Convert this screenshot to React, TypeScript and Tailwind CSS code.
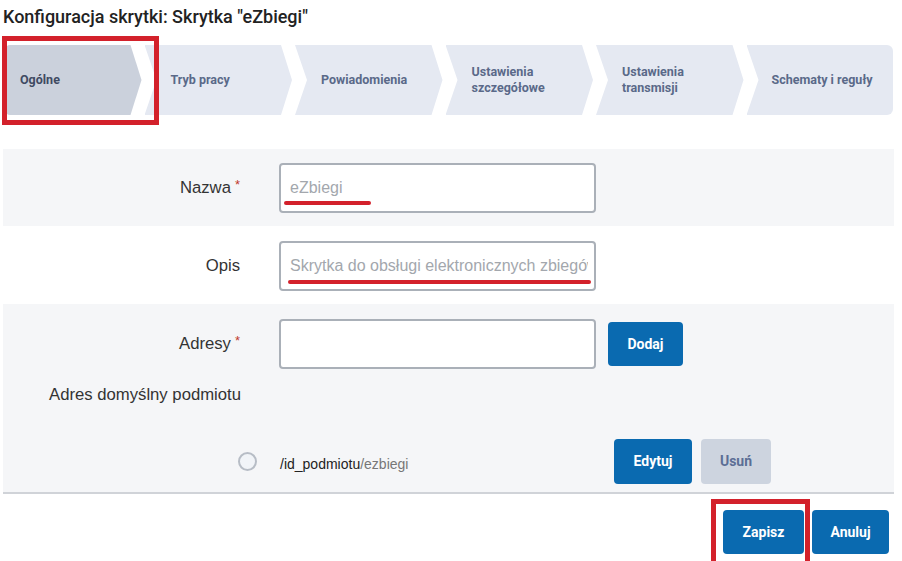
import React from "react";

const steps = [
  { label: "Ogólne", active: true },
  { label: "Tryb pracy" },
  { label: "Powiadomienia" },
  { label: ["Ustawienia", "szczegółowe"] },
  { label: ["Ustawienia", "transmisji"] },
  { label: "Schematy i reguły" },
];

function Step({ label, active, index, last }: { label: string | string[]; active?: boolean; index: number; last: boolean }) {
  let shape = "[clip-path:polygon(0_0,calc(100%_-_11px)_0,100%_50%,calc(100%_-_11px)_100%,0_100%,12px_50%)] pl-[26px]";
  if (index === 0) shape = "[clip-path:polygon(0_0,calc(100%_-_11px)_0,100%_50%,calc(100%_-_11px)_100%,0_100%)] pl-[14px] rounded-l-[4px]";
  if (last) shape = "[clip-path:polygon(0_0,100%_0,100%_100%,0_100%,12px_50%)] pl-[25px] rounded-r-[6px]";
  return (
    <div
      className={`flex-1 h-full flex items-center text-[12.5px] font-bold leading-[16px] ${shape} ${
        active ? "bg-[#cbd1dc] text-[#3f4a62]" : "bg-[#e5e9f2] text-[#5a6989]"
      }`}
    >
      {Array.isArray(label) ? (
        <div>
          {label.map((l) => (
            <div key={l}>{l}</div>
          ))}
        </div>
      ) : (
        label
      )}
    </div>
  );
}

function Label({ text, required }: { text: string; required?: boolean }) {
  return (
    <div className="w-[238px] shrink-0 text-right pr-[1px] text-[16.7px] text-[#333]">
      {text}
      {required && <span className="text-[#c0392b] text-[13px] align-top ml-[4px]">*</span>}
    </div>
  );
}

export default function App() {
  return (
    <div className="w-[902px] h-[561px] bg-white relative overflow-hidden font-['Roboto',sans-serif]">
      {/* Title */}
      <h1 className="pl-[3px] pt-[5px] text-[18px] font-medium leading-[24px] text-[#222]">
        Konfiguracja skrytki: Skrytka "eZbiegi"
      </h1>

      {/* Stepper */}
      <div className="relative mt-[16px] ml-[6px] w-[887px] h-[70px] flex gap-[3px]">
        {steps.map((s, i) => (
          <Step key={i} label={s.label} active={s.active} index={i} last={i === steps.length - 1} />
        ))}
        <div className="absolute left-[-4px] top-[-9px] w-[157px] h-[89px] border-[5px] border-[#d3212b]" />
      </div>

      {/* Form */}
      <div className="mt-[34px] ml-[3px] w-[891px] font-['Liberation_Sans',Arial,sans-serif]">
        {/* Nazwa */}
        <div className="h-[77px] bg-[#f5f6f8] flex items-center">
          <Label text="Nazwa" required />
          <div className="relative ml-[38px]">
            <input
              readOnly
              placeholder="eZbiegi"
              className="w-[317px] h-[50px] border-2 border-[#aab0b8] rounded-[4px] bg-white pl-[9px] pr-[6px] text-[16px] placeholder:text-[#a3a7ad] outline-none"
            />
            <div className="absolute left-[5px] top-[38px] w-[87px] h-[4px] rounded-full bg-[#d3212b]" />
          </div>
        </div>

        {/* Opis */}
        <div className="h-[78px] bg-white flex items-center pt-[2px]">
          <Label text="Opis" />
          <div className="relative ml-[38px]">
            <input
              readOnly
              placeholder="Skrytka do obsługi elektronicznych zbiegów"
              className="w-[317px] h-[50px] border-2 border-[#aab0b8] rounded-[4px] bg-white pl-[9px] pr-[6px] text-[16px] placeholder:text-[#a3a7ad] outline-none"
            />
            <div className="absolute left-[9px] top-[39px] w-[303px] h-[4px] rounded-full bg-[#d3212b]" />
          </div>
        </div>

        {/* Adresy */}
        <div className="bg-[#f5f6f8] pt-[15px] pb-[8px] border-b-2 border-[#d0d3d8]">
          <div className="flex items-center">
            <Label text="Adresy" required />
            <input
              readOnly
              className="ml-[38px] w-[317px] h-[50px] border-2 border-[#aab0b8] rounded-[4px] bg-white outline-none"
            />
            <button className="ml-[12px] w-[75px] h-[44px] rounded-[4px] bg-[#0a6ab0] text-white text-[14px] font-bold font-['Roboto',sans-serif]">
              Dodaj
            </button>
          </div>
          <div className="mt-[14px] pl-[46px] text-[16.7px] leading-[24px] text-[#333]">Adres domyślny podmiotu</div>
          <div className="mt-[32px] h-[45px] flex items-center pl-[235px]">
            <div className="w-[19px] h-[19px] rounded-full border-2 border-[#b7bdc6] bg-[#f1f4f8]" />
            <div className="ml-[23px] w-[334px] text-[14px] pt-[6px]">
              <span className="text-[#222]">/id_podmiotu</span>
              <span className="text-[#777]">/ezbiegi</span>
            </div>
            <button className="w-[78px] h-[45px] rounded-[4px] bg-[#0a6ab0] text-white text-[14px] font-bold font-['Roboto',sans-serif]">
              Edytuj
            </button>
            <button className="ml-[9px] w-[70px] h-[45px] rounded-[4px] bg-[#cdd4df] text-[#5b6e95] text-[14px] font-bold font-['Roboto',sans-serif]">
              Usuń
            </button>
          </div>
        </div>

        {/* Footer */}
        <div className="relative flex justify-end gap-[8px] pt-[16px] pr-[5px] font-['Roboto',sans-serif]">
          <div className="relative">
            <button className="w-[81px] h-[44px] rounded-[4px] bg-[#0a6ab0] text-white text-[14px] font-bold">Zapisz</button>
            <div className="absolute left-[-12px] top-[-11px] w-[99px] h-[70px] border-[5px] border-[#d3212b]" />
          </div>
          <button className="w-[77px] h-[44px] rounded-[4px] bg-[#0a6ab0] text-white text-[14px] font-bold">Anuluj</button>
        </div>
      </div>
    </div>
  );
}
